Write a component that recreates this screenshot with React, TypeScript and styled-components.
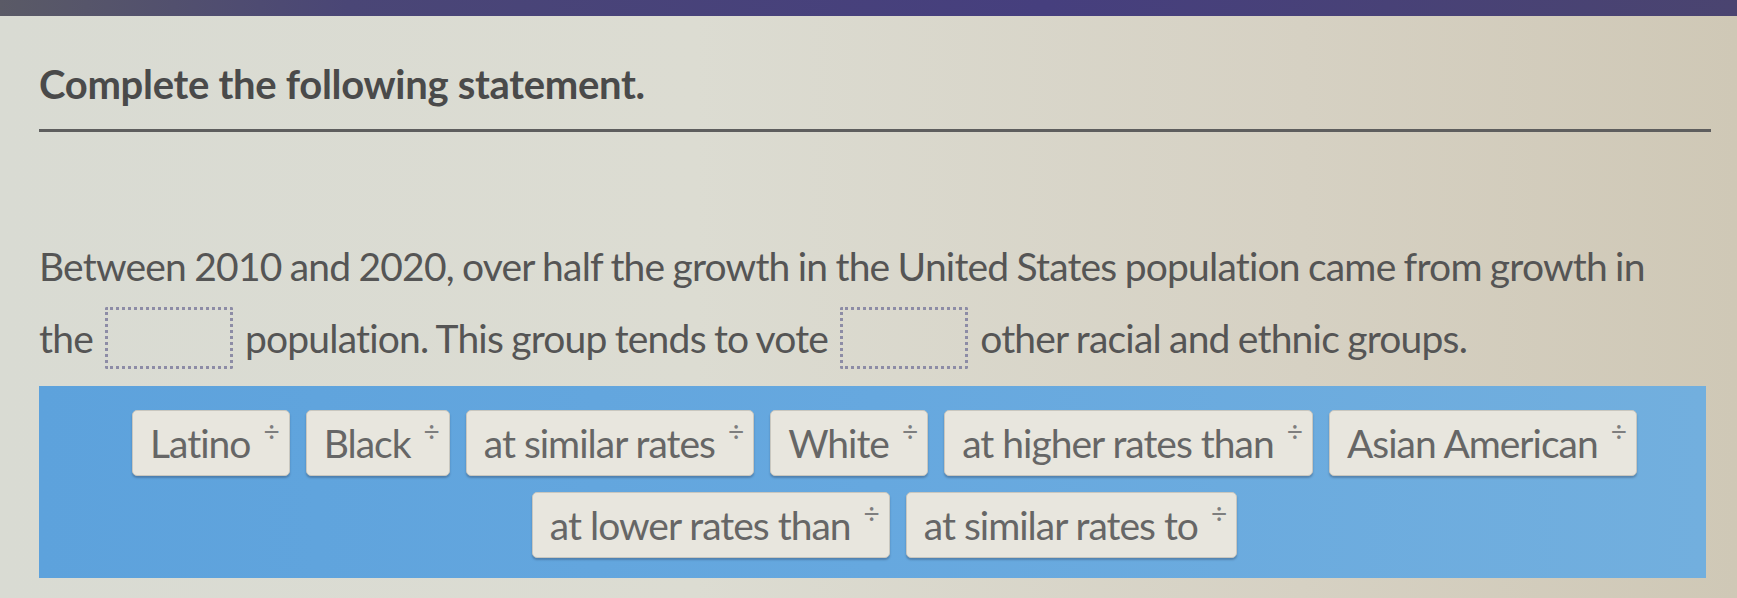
import React from "react";
import styled, { createGlobalStyle } from "styled-components";

const Global = createGlobalStyle`
  html, body {
    margin: 0;
    padding: 0;
  }
  body {
    width: 1737px;
    height: 598px;
    overflow: hidden;
    font-family: Lato, "Open Sans", "Liberation Sans", sans-serif;
    background: linear-gradient(90deg, #d9dbd3 0%, #dcdcd2 40%, #d6d1c3 75%, #cfc8b6 100%);
  }
`;

const Page = styled.div`
  display: flex;
  flex-direction: column;
  height: 598px;
`;

const TopBar = styled.div`
  height: 16px;
  flex: none;
  background: linear-gradient(90deg, #5a5a66 0%, #4a4676 20%, #463f7e 60%, #4a4470 100%);
`;

const Body = styled.div`
  display: flex;
  flex-direction: column;
  padding: 0 26px 0 39px;
`;

const Heading = styled.h1`
  margin: 43px 0 0;
  font-size: 40px;
  font-weight: 700;
  line-height: 50px;
  color: #4a4a4a;
  letter-spacing: -0.3px;
`;

const Rule = styled.hr`
  margin: 20px 0 0;
  border: none;
  height: 3px;
  background: #5e5e5e;
`;

const Statement = styled.p`
  margin: 98px 0 0;
  font-size: 39px;
  line-height: 72px;
  color: #555;
  letter-spacing: -0.8px;
  word-spacing: -1px;
`;

const Blank = styled.span`
  display: inline-block;
  width: 122px;
  height: 56px;
  margin: 0 12px;
  vertical-align: -16px;
  border: 3px dotted #8d8ca6;
  border-radius: 2px;
`;

const Bank = styled.div`
  margin: 12px 5px 0 0;
  padding: 24px 8px 20px 32px;
  background: linear-gradient(90deg, #5da2dc 0%, #66a8df 50%, #72afde 100%);
  display: flex;
  flex-wrap: wrap;
  justify-content: center;
  gap: 16px 16px;
`;

const Chip = styled.div`
  display: flex;
  align-items: center;
  height: 66px;
  padding: 0 10px 0 17px;
  background: #e8e6de;
  border: 1px solid #c9c7bf;
  border-radius: 5px;
  box-shadow: 0 2px 2px rgba(40, 60, 90, 0.35);
  font-size: 39px;
  color: #666;
  letter-spacing: -1px;
  box-sizing: border-box;
`;

const Handle = styled.span`
  align-self: flex-start;
  margin: 8px 0 0 13px;
  font-size: 28px;
  line-height: 24px;
  color: #7e7e7e;
`;

const choices = [
  "Latino",
  "Black",
  "at similar rates",
  "White",
  "at higher rates than",
  "Asian American",
  "at lower rates than",
  "at similar rates to",
];

export default function App() {
  return (
    <Page>
      <Global />
      <TopBar />
      <Body>
        <Heading>Complete the following statement.</Heading>
        <Rule />
        <Statement>
          Between 2010 and 2020, over half the growth in the United States population came from growth in
          <br />
          the
          <Blank />
          population. This group tends to vote
          <Blank />
          other racial and ethnic groups.
        </Statement>
        <Bank>
          {choices.map((c) => (
            <Chip key={c}>
              {c}
              <Handle>÷</Handle>
            </Chip>
          ))}
        </Bank>
      </Body>
    </Page>
  );
}
